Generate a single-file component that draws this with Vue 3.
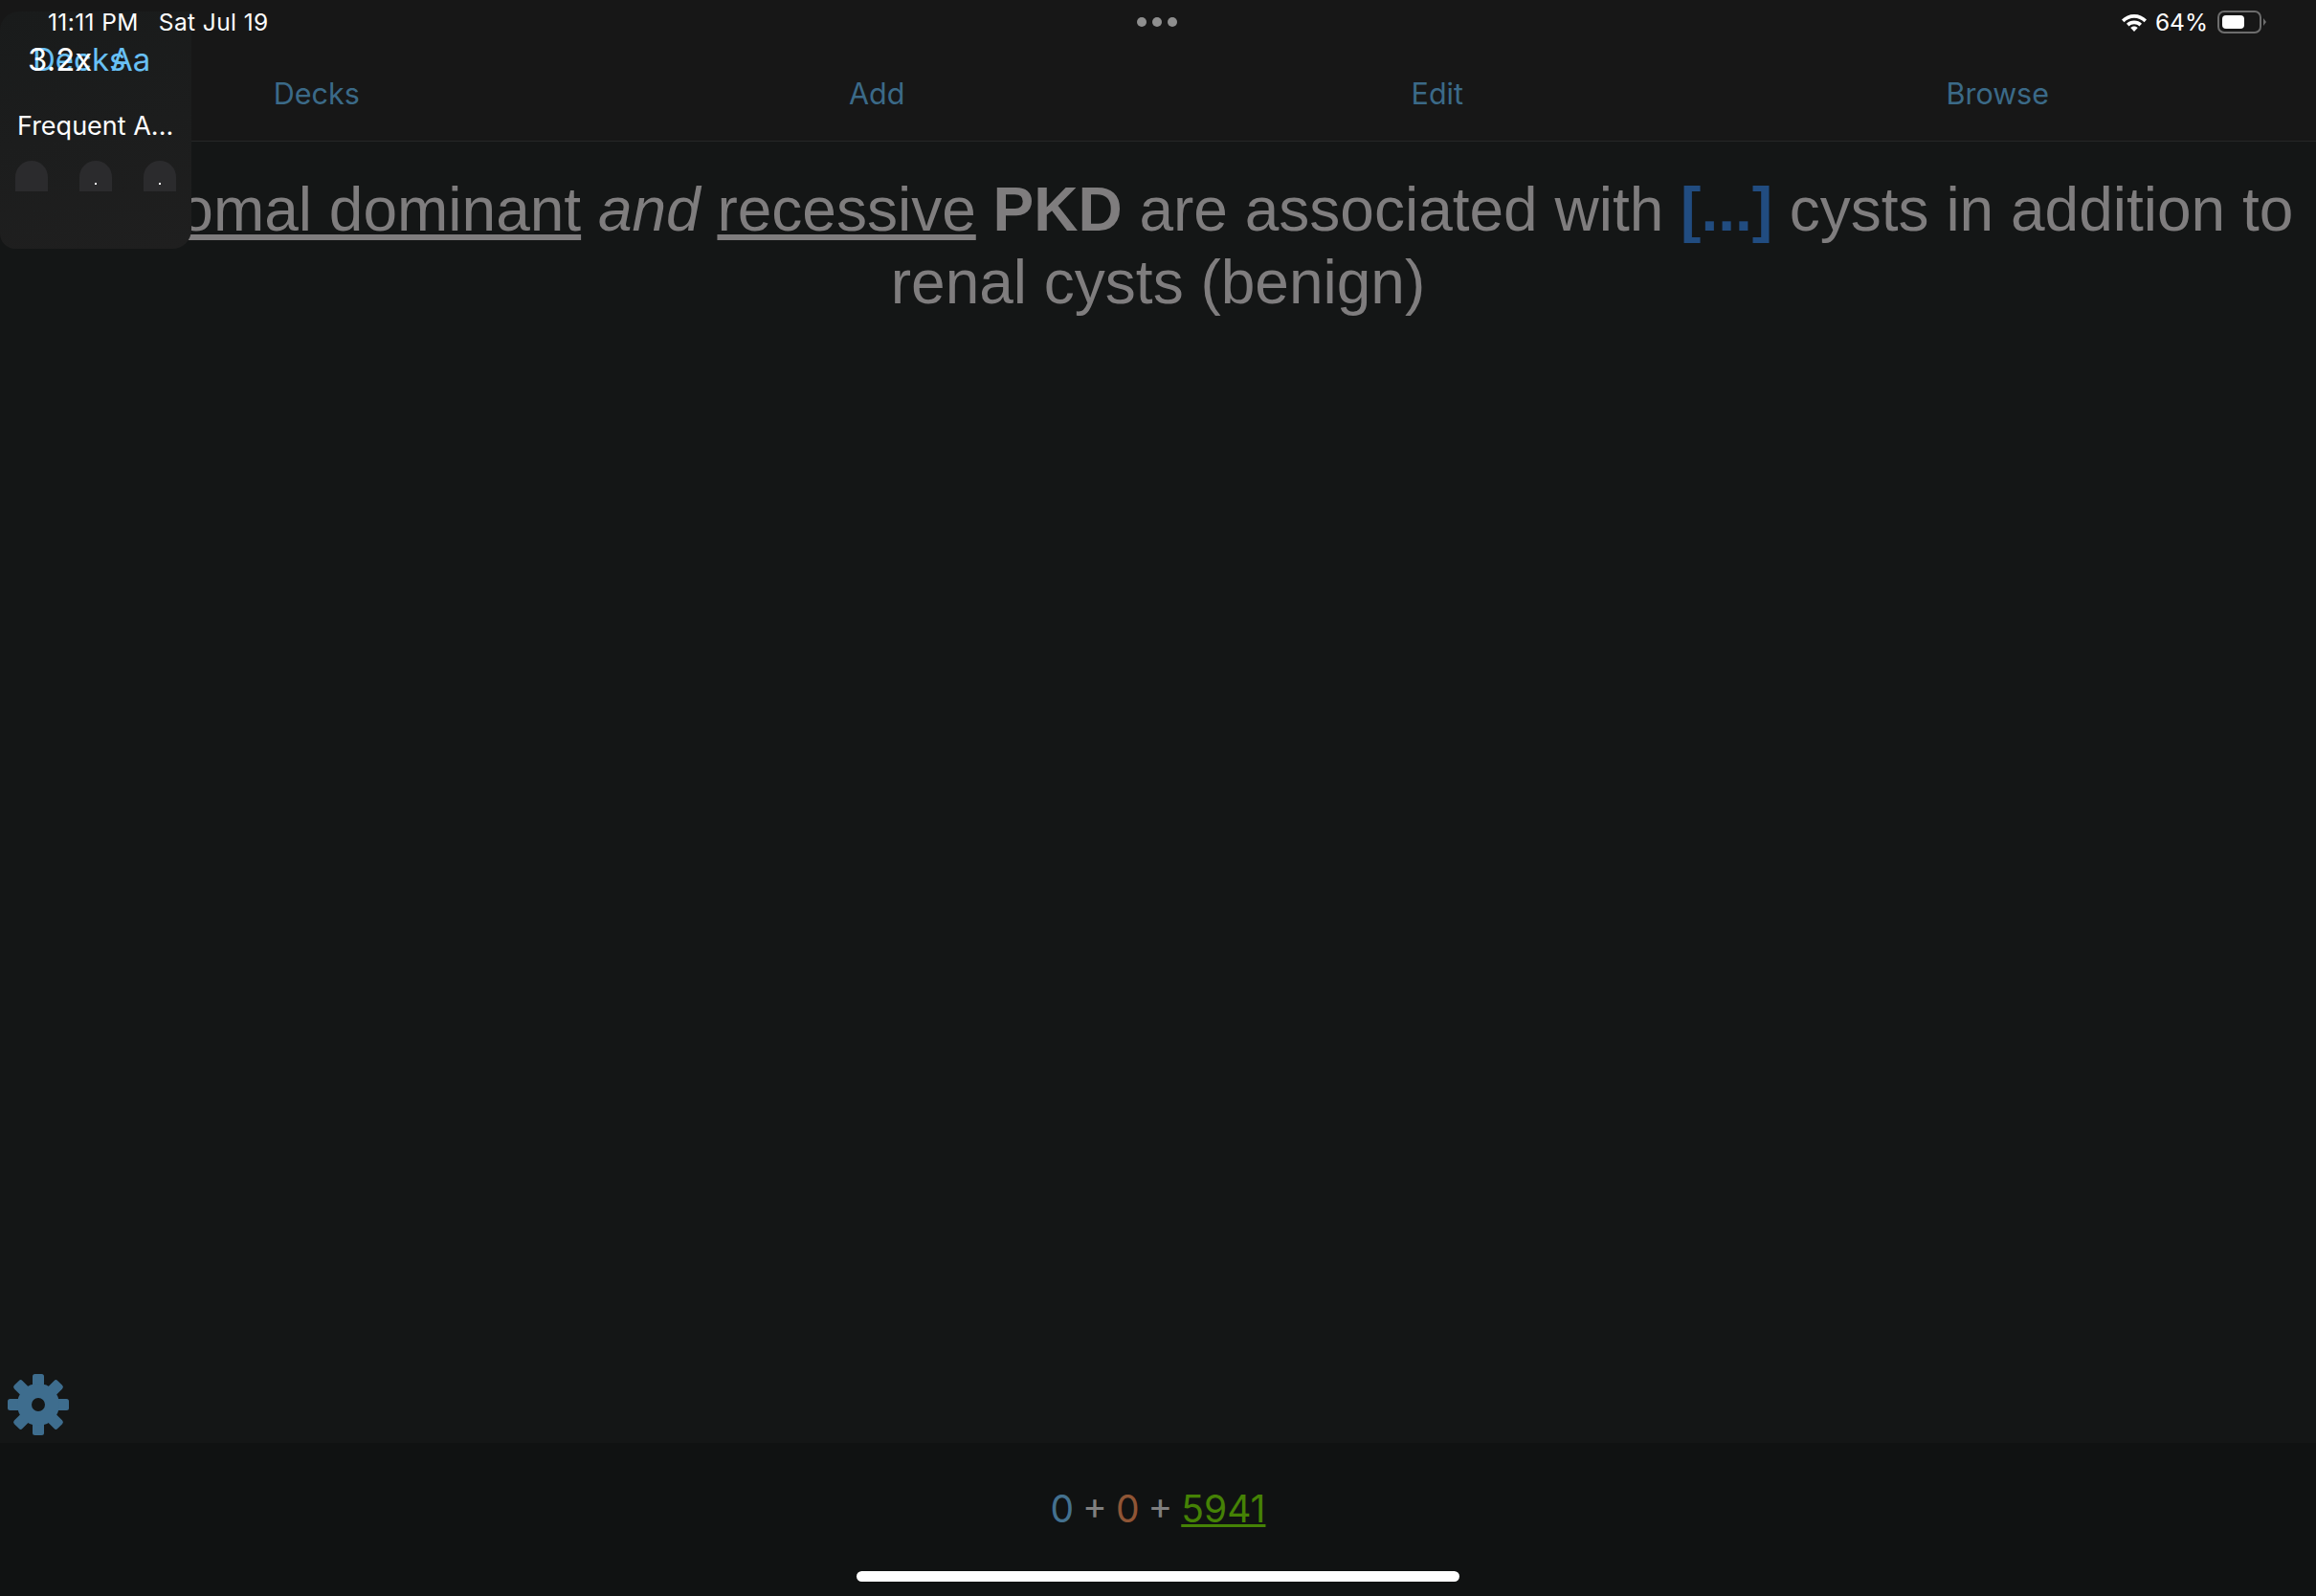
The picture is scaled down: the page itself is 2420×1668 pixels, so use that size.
<template>
  <div class="screen">
    <header class="topbar">
      <div class="status">
        <div class="status-left">
          <span>11:11 PM</span>
          <span>Sat Jul 19</span>
        </div>
        <div class="dots"><i></i><i></i><i></i></div>
        <div class="status-right">
          <svg class="wifi" width="28" height="22" viewBox="0 0 28 22">
            <path d="M14 3C9 3 4.500 5 1 8.500l2.500 2.700C6.300 8.400 10 6.800 14 6.800s7.700 1.600 10.500 4.400L27 8.500C23.500 5 19 3 14 3z" fill="#fff" />
            <path d="M14 9.500c-3.100 0-5.900 1.200-8 3.200l2.600 2.700c1.400-1.400 3.300-2.200 5.400-2.200s4 .8 5.400 2.200l2.600-2.700c-2.100-2-4.900-3.200-8-3.200z" fill="#fff" />
            <path d="M14 15.500c-1.500 0-2.800.6-3.800 1.500l3.800 4 3.800-4c-1-.9-2.300-1.500-3.800-1.500z" fill="#fff" />
          </svg>
          <span>64%</span>
          <div class="battery"><div class="battery-fill" :style="{ width: '64%' }"></div></div>
          <div class="battery-cap"></div>
        </div>
      </div>
      <nav class="tabs">
        <span v-for="tab in tabs" :key="tab" class="tab">{{ tab }}</span>
      </nav>
    </header>

    <main class="card">
      <p class="question">
        <u>Autosomal dominant</u> <em>and</em> <u>recessive</u> <strong>PKD</strong> are associated with
        <strong class="cloze">[...]</strong> cysts in addition to renal cysts (benign)
      </p>
    </main>

    <footer class="counts">
      <span class="blue">0</span> + <span class="orange">0</span> + <u class="green">5941</u>
    </footer>
    <div class="home-bar"></div>

    <svg class="gear" width="66" height="66" viewBox="-33 -33 66 66">
      <g fill="#3e6d8e">
        <rect v-for="a in teeth" :key="a" x="-6" y="-32" width="12" height="16" rx="2.500" :transform="`rotate(${a})`" />
      </g>
      <circle r="14.500" fill="none" stroke="#3e6d8e" stroke-width="15" />
    </svg>

    <aside class="slideover">
      <div class="slide-head">
        <span class="back">Decks</span>
        <span class="font-btn">Aa</span>
        <span class="speed">3.2x</span>
      </div>
      <div class="slide-title">Frequent A...</div>
      <div class="slide-keys">
        <div v-for="k in keys" :key="k.id" class="key"><b v-if="k.dot"></b></div>
      </div>
    </aside>
  </div>
</template>

<script setup>
const tabs = ['Decks', 'Add', 'Edit', 'Browse']
const teeth = [0, 45, 90, 135, 180, 225, 270, 315]
const keys = [
  { id: 1, dot: false },
  { id: 2, dot: true },
  { id: 3, dot: true },
]
</script>

<style>
html,
body {
  margin: 0;
  background: #141616;
}
</style>

<style scoped>
.screen {
  position: relative;
  width: 2420px;
  height: 1668px;
  overflow: hidden;
  display: flex;
  flex-direction: column;
  background: #141616;
  font-family: Inter, "Liberation Sans", sans-serif;
  color: #fff;
}

.topbar {
  height: 148px;
  box-sizing: border-box;
  background: #171717;
  border-bottom: 1px solid #262727;
  flex-shrink: 0;
}

.status {
  position: relative;
  z-index: 2;
  height: 46px;
  padding: 0 52px 0 50px;
  display: grid;
  grid-template-columns: 1fr auto 1fr;
  align-items: center;
  font-size: 24.500px;
}

.status-left {
  display: flex;
  gap: 21px;
  letter-spacing: 0.4px;
}

.dots {
  display: flex;
  gap: 6px;
}

.dots i {
  width: 10px;
  height: 10px;
  border-radius: 50%;
  background: #8f8f8f;
}

.status-right {
  display: flex;
  align-items: center;
  justify-content: flex-end;
}

.wifi {
  margin-right: 8px;
}

.battery {
  width: 46px;
  height: 24px;
  margin-left: 10px;
  padding: 3px;
  box-sizing: border-box;
  border: 2px solid #6d6d6d;
  border-radius: 7px;
}

.battery-fill {
  height: 100%;
  background: #fff;
  border-radius: 4px;
}

.battery-cap {
  width: 0;
  height: 0;
  margin-left: 2px;
  border-left: 3px solid #6d6d6d;
  border-top: 4px solid transparent;
  border-bottom: 4px solid transparent;
}

.tabs {
  height: 102px;
  display: grid;
  grid-template-columns: repeat(4, 1fr);
  padding: 0 40px 0 38px;
}

.tab {
  padding-top: 33px;
  text-align: center;
  font-size: 30.500px;
  color: #3b6a88;
}

.card {
  flex: 1;
  padding-top: 33px;
}

.question {
  margin: 0 auto;
  width: 2400px;
  text-align: center;
  font-family: "Liberation Sans", Arial, sans-serif;
  font-size: 64px;
  line-height: 76px;
  color: #7f7d7e;
}

.cloze {
  color: #214c80;
}

.counts {
  height: 160px;
  box-sizing: border-box;
  padding-top: 45px;
  flex-shrink: 0;
  background: #101212;
  text-align: center;
  font-size: 39px;
  word-spacing: -2px;
  color: #7f7f7f;
}

.blue {
  color: #44718f;
}

.orange {
  color: #8f5535;
}

.green {
  color: #458205;
}

.home-bar {
  position: absolute;
  left: 895px;
  bottom: 15px;
  width: 630px;
  height: 11px;
  border-radius: 6px;
  background: #fff;
}

.gear {
  position: absolute;
  left: 7px;
  top: 1435px;
}

.slideover {
  position: absolute;
  z-index: 1;
  left: 0;
  top: 12px;
  width: 200px;
  height: 248px;
  border-radius: 20px 0 20px 16px;
  background: linear-gradient(170deg, #191b1b, #1f1f1f);
}

.slide-head {
  position: relative;
  height: 88px;
}

.slide-head span {
  position: absolute;
  top: 30px;
  font-size: 33px;
  line-height: 40px;
}

.slide-head .speed {
  left: 29px;
  color: #fff;
}

.back {
  left: 34px;
  color: #68c0f5;
}

.font-btn {
  left: 116px;
  color: #68c0f5;
}

.slide-title {
  padding-left: 18px;
  margin-top: 14px;
  font-size: 27px;
  line-height: 36px;
}

.slide-keys {
  display: flex;
  justify-content: space-between;
  padding: 0 16px;
  margin-top: 18px;
}

.key {
  position: relative;
  width: 34px;
  height: 32px;
  border-radius: 17px 17px 0 0;
  background: #2b2b2d;
}

.key b {
  position: absolute;
  left: 16px;
  top: 23px;
  width: 2px;
  height: 2px;
  background: #fff;
}
</style>
